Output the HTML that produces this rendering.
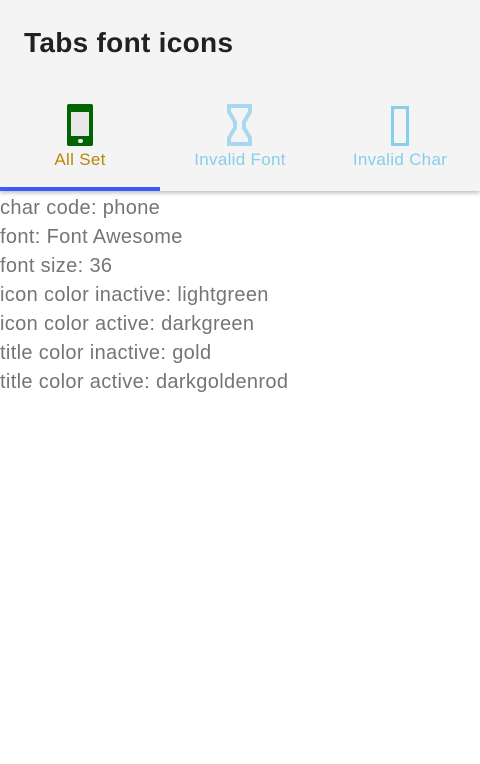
<!DOCTYPE html>
<html><head><meta charset="utf-8"><style>
body{margin:0;width:480px;height:764px;background:#fff;font-family:"Liberation Sans",Roboto,sans-serif;overflow:hidden;position:relative}
.hdr{position:absolute;left:0;top:0;width:480px;height:191px;background:#f4f4f4;box-shadow:0 2px 4px rgba(0,0,0,.25)}
.title{position:absolute;left:24px;top:27px;font-size:28px;font-weight:bold;color:#212121;letter-spacing:0.3px}
.tab{position:absolute;top:92px;width:160px;height:99px;text-align:center}
.lbl{position:absolute;top:58px;width:160px;left:0;font-size:17px;letter-spacing:0.3px}
.ind{position:absolute;left:0;top:187px;width:160px;height:4px;background:#3d5afe}
.lines{position:absolute;left:0;top:194px;font-size:20px;color:#757575;line-height:29px;letter-spacing:0.35px}
</style></head><body>
<div class="hdr">
<div class="title">Tabs font icons</div>
<div class="tab" style="left:0">
 <div style="position:absolute;left:67px;top:12px;width:26px;height:42px;background:#006400;border-radius:2px">
  <div style="position:absolute;left:4px;top:8px;width:18px;height:24px;background:#e8e8e8"></div>
  <div style="position:absolute;left:11px;top:35px;width:5px;height:4px;background:#e8e8e8;border-radius:2px"></div>
 </div>
 <div class="lbl" style="color:#b8860b">All Set</div>
</div>
<div class="tab" style="left:160px">
 <svg style="position:absolute;left:67px;top:12px" width="25" height="42"><path d="M2 2h21v6l-6 10v6l6 10v6H2v-6l6-10v-6L2 8z" fill="none" stroke="#a8d8ee" stroke-width="4"/></svg>
 <div class="lbl" style="color:#87ceeb">Invalid Font</div>
</div>
<div class="tab" style="left:320px">
 <svg style="position:absolute;left:71px;top:14px" width="18" height="40"><rect x="1.5" y="1.5" width="15" height="37" fill="none" stroke="#87ceeb" stroke-width="3"/></svg>
 <div class="lbl" style="color:#87ceeb">Invalid Char</div>
</div>
<div class="ind"></div>
</div>
<div class="lines">char code: phone<br>font: Font Awesome<br>font size: 36<br>icon color inactive: lightgreen<br>icon color active: darkgreen<br>title color inactive: gold<br>title color active: darkgoldenrod</div>
</body></html>
